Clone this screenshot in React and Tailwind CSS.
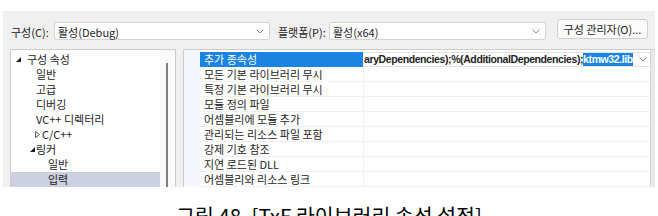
import React from "react";

function Chevron({ className = "" }) {
  return (
    <svg width="8" height="5" viewBox="0 0 8 5" className={className}>
      <polyline points="0.5,0.5 4,4 7.5,0.5" fill="none" stroke="#8a8a8a" strokeWidth="1" />
    </svg>
  );
}

function Combo({ w, text }) {
  return (
    <div className={`${w} mt-[11px] h-[18px] bg-white border border-[#d4d4d4] rounded-[2px] flex items-center justify-between pl-[3px] pr-[5px]`}>
      <span className="leading-[16px] mt-[1px]">{text}</span>
      <Chevron />
    </div>
  );
}

function OpenArrow() {
  return (
    <svg width="5" height="5" viewBox="0 0 5 5">
      <polygon points="5,0 5,5 0,5" fill="#1e1e1e" />
    </svg>
  );
}

function ClosedArrow() {
  return (
    <svg width="5" height="7" viewBox="0 0 5 7">
      <polygon points="0.5,0.5 4.5,3.5 0.5,6.5" fill="none" stroke="#444" strokeWidth="0.9" />
    </svg>
  );
}

const tree = [
  { t: "구성 속성", lead: "w-[5px]", arrow: "open", gap: "w-[6px]" },
  { t: "일반", lead: "w-[25px]" },
  { t: "고급", lead: "w-[25px]" },
  { t: "디버깅", lead: "w-[25px]" },
  { t: "VC++ 디렉터리", lead: "w-[25px]" },
  { t: "C/C++", lead: "w-[24px]", arrow: "closed", gap: "w-[2px]" },
  { t: "링커", lead: "w-[19px]", arrow: "open", gap: "w-[1px]" },
  { t: "일반", lead: "w-[37px]" },
  { t: "입력", lead: "w-[37px]", sel: true },
];

const names = [
  "추가 종속성",
  "모든 기본 라이브러리 무시",
  "특정 기본 라이브러리 무시",
  "모듈 정의 파일",
  "어셈블리에 모듈 추가",
  "관리되는 리소스 파일 포함",
  "강제 기호 참조",
  "지연 로드된 DLL",
  "어셈블리와 리소스 링크",
];

export default function App() {
  return (
    <div className="w-[658px] h-[216px] bg-white overflow-hidden font-['Noto_Sans_CJK_KR',sans-serif] text-[#1e1e1e]">
      <div className="pt-[11px] px-[3px]">
        <div className="h-[176px] bg-[#f0f0f0] flex flex-col overflow-hidden">
          <div className="h-[38px] shrink-0 flex items-start pl-[8px] text-[11px]">
            <div className="w-[43px] mt-[13px] leading-[16px]">구성(C):</div>
            <Combo w="w-[216px]" text="활성(Debug)" />
            <div className="ml-[8px] w-[51px] mt-[13px] leading-[16px]">플랫폼(P):</div>
            <Combo w="w-[217px]" text="활성(x64)" />
            <div className="ml-[11px] mt-[8px] w-[91px] h-[20px] border border-[#cfcfcf] rounded-[3px] bg-[#fbfbfb] flex items-center justify-center leading-[16px]">
              구성 관리자(O)...
            </div>
          </div>
          <div className="flex flex-1 min-h-0 pl-[7px] text-[11px]">
            <div className="w-[166px] border-l border-t border-r border-[#cccccc] bg-white flex">
              <div className="w-[149px] pt-[2px]">
                {tree.map((r, i) => (
                  <div key={i} className={`h-[15px] flex items-center ${r.sel ? "bg-[#cdd0e0]" : ""}`}>
                    <div className={`${r.lead} shrink-0`} />
                    {r.arrow === "open" && <OpenArrow />}
                    {r.arrow === "closed" && <ClosedArrow />}
                    {r.arrow && <div className={`${r.gap} shrink-0`} />}
                    <span className="leading-[15px] whitespace-nowrap">{r.t}</span>
                  </div>
                ))}
              </div>
              <div className="flex-1 bg-[#f9f9f9] pt-[13px] pl-[6px]">
                <div className="w-[2px] h-full bg-[#808080]" />
              </div>
            </div>
            <div className="ml-[7px] flex-1 border-l border-t border-[#cccccc] bg-white flex">
              <div className="w-[16px] bg-[#f4f7fc]" />
              <div className="w-[163px] pt-[2px]">
                {names.map((n, i) => (
                  <div
                    key={i}
                    className={`h-[15px] flex items-center pl-[4px] border-b ${i === 0 ? "bg-[#1a84e0] text-white border-[#1a84e0]" : "border-[#f0f0f0]"}`}
                  >
                    <span className="leading-[14px] whitespace-nowrap">{n}</span>
                  </div>
                ))}
              </div>
              <div className="flex-1 pt-[2px] min-w-0">
                <div className="h-[15px] flex items-center border-t border-b border-[#e2e2e2] overflow-hidden">
                  <span className="pl-[1px] font-['Liberation_Sans',sans-serif] font-bold text-[10.5px] tracking-[-0.4px] whitespace-nowrap leading-[13px]">
                    aryDependencies);%(AdditionalDependencies);
                  </span>
                  <span className="font-['Liberation_Sans',sans-serif] font-bold text-[10.5px] tracking-[-0.4px] whitespace-nowrap leading-[13px] bg-[#1a84e0] text-white">
                    ktmw32.lib
                  </span>
                  <div className="flex-1" />
                  <div className="w-[14px] h-full flex items-center justify-center">
                    <Chevron />
                  </div>
                </div>
                {names.slice(1).map((n, i) => (
                  <div key={i} className="h-[15px] border-b border-l border-[#f0f0f0]" />
                ))}
              </div>
              <div className="w-[5px] bg-[#e8e8e8] border-l border-[#d8d8d8]" />
            </div>
          </div>
        </div>
      </div>
      <div className="mt-[18px] text-center text-[20.5px] leading-[20px] text-black whitespace-nowrap">
        그림 48.  [TxF 라이브러리 속성 설정]
      </div>
    </div>
  );
}
